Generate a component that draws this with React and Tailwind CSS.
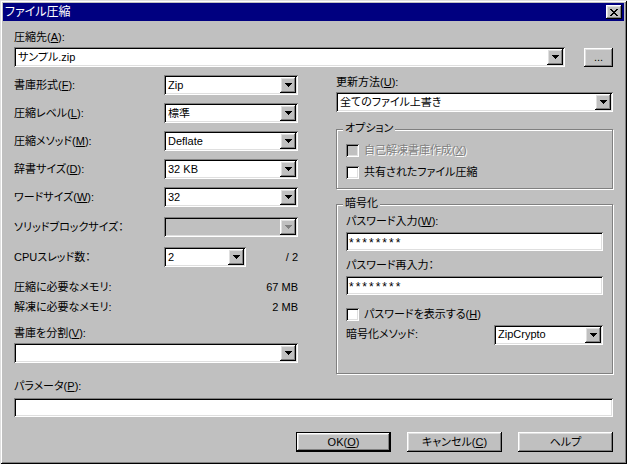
import React from 'react';

const raised =
  'bg-[#c0c0c0] shadow-[inset_-1px_-1px_0_#000000,inset_1px_1px_0_#ffffff,inset_-2px_-2px_0_#808080,inset_2px_2px_0_#dfdfdf]';
const sunken =
  'shadow-[inset_1px_1px_0_#808080,inset_-1px_-1px_0_#ffffff,inset_2px_2px_0_#000000,inset_-2px_-2px_0_#dfdfdf]';

const Arrow = ({ disabled }) => (
  <svg width="7" height="4" viewBox="0 0 7 4" shapeRendering="crispEdges">
    <path d="M0 0h7v1H0zM1 1h5v1H1zM2 2h3v1H2zM3 3h1v1H3z" fill={disabled ? '#808080' : '#000'} />
  </svg>
);

const Combo = ({ value, className = '', disabled }) => (
  <div
    className={`flex h-[20px] items-center pl-[4px] ${sunken} ${disabled ? 'bg-[#c0c0c0]' : 'bg-white'} ${className}`}
  >
    <span className="flex-1 truncate leading-none">{value}</span>
    <div className={`mr-[2px] flex h-[16px] w-[16px] items-center justify-center ${raised}`}>
      <Arrow disabled={disabled} />
    </div>
  </div>
);

const TextBox = ({ value, className = '' }) => (
  <div className={`flex h-[19px] items-center bg-white pl-[3px] ${sunken} ${className}`}>
    <span className="pt-[3px] text-[12px] leading-none tracking-[2px]">{value}</span>
  </div>
);

const Check = ({ label, disabled }) => (
  <div className="flex h-[13px] items-center">
    <div className={`h-[13px] w-[13px] ${sunken} ${disabled ? 'bg-[#c0c0c0]' : 'bg-white'}`} />
    <span
      className={`ml-[5px] leading-none ${disabled ? 'text-[#808080] [text-shadow:1px_1px_0_#ffffff]' : ''}`}
    >
      {label}
    </span>
  </div>
);

const Row = ({ label, children, className = '' }) => (
  <div className={`flex h-[20px] items-center ${className}`}>
    <span className="w-[150px] leading-none">{label}</span>
    {children}
  </div>
);

const Group = ({ title, className = '', children }) => (
  <div
    className={`relative border border-[#808080] shadow-[inset_1px_1px_0_#ffffff,1px_1px_0_#ffffff] ${className}`}
  >
    <span className="absolute top-[-7px] left-[6px] bg-[#c0c0c0] px-[2px] leading-none">{title}</span>
    {children}
  </div>
);

const Button = ({ children, isDefault }) => (
  <div className={`h-[20px] w-[95px] ${isDefault ? 'border border-black' : ''}`}>
    <div className={`flex h-full w-full items-center justify-center ${raised}`}>
      <span className="leading-none">{children}</span>
    </div>
  </div>
);

export default function App() {
  return (
    <div
      className="flex h-[464px] w-[627px] flex-col bg-[#c0c0c0] p-[3px] text-[11px] text-black [font-feature-settings:'palt'] font-['Liberation_Sans','Noto_Sans_CJK_JP',sans-serif] shadow-[inset_1px_1px_0_#dfdfdf,inset_-1px_-1px_0_#000000,inset_2px_2px_0_#ffffff,inset_-2px_-2px_0_#808080]"
    >
      {/* title bar */}
      <div className="flex h-[18px] items-center justify-between bg-[#000080] pl-[2px] pr-[2px]">
        <span className="text-[12px] leading-none text-white">ファイル圧縮</span>
        <div className={`flex h-[14px] w-[16px] items-center justify-center ${raised}`}>
          <svg width="8" height="7" viewBox="0 0 8 7" shapeRendering="crispEdges">
            <path
              d="M0 0h2v1H0zM6 0h2v1H6zM1 1h2v1H1zM5 1h2v1H5zM2 2h4v1H2zM3 3h2v1H3zM2 4h4v1H2zM1 5h2v1H1zM5 5h2v1H5zM0 6h2v1H0zM6 6h2v1H6z"
              fill="#000"
            />
          </svg>
        </div>
      </div>

      <div className="flex flex-1 flex-col px-[11px]">
        <div className="mt-[9px] flex h-[14px] items-center leading-none">
          圧縮先(<u>A</u>):
        </div>
        <div className="mt-[3px] flex items-center">
          <Combo value="サンプル.zip" className="w-[551px]" />
          <div className={`ml-[19px] flex h-[19px] w-[29px] items-center justify-center ${raised}`}>
            <span className="leading-none">...</span>
          </div>
        </div>

        <div className="flex">
          {/* left column */}
          <div className="flex w-[284px] flex-col">
            <Row label={<>書庫形式(<u>F</u>):</>} className="mt-[8px]">
              <Combo value="Zip" className="w-[134px]" />
            </Row>
            <Row label={<>圧縮レベル(<u>L</u>):</>} className="mt-[8px]">
              <Combo value="標準" className="w-[134px]" />
            </Row>
            <Row label={<>圧縮メソッド(<u>M</u>):</>} className="mt-[8px]">
              <Combo value="Deflate" className="w-[134px]" />
            </Row>
            <Row label={<>辞書サイズ(<u>D</u>):</>} className="mt-[8px]">
              <Combo value="32 KB" className="w-[134px]" />
            </Row>
            <Row label={<>ワードサイズ(<u>W</u>):</>} className="mt-[8px]">
              <Combo value="32" className="w-[134px]" />
            </Row>
            <Row label="ソリッドブロックサイズ：" className="mt-[10px]">
              <Combo value="" disabled className="w-[134px]" />
            </Row>
            <Row label="CPUスレッド数：" className="mt-[10px]">
              <Combo value="2" className="w-[82px]" />
              <span className="flex-1 text-right leading-none">/ 2</span>
            </Row>
            <div className="mt-[13px] flex h-[14px] items-center justify-between leading-none">
              <span>圧縮に必要なメモリ:</span>
              <span>67 MB</span>
            </div>
            <div className="mt-[6px] flex h-[14px] items-center justify-between leading-none">
              <span>解凍に必要なメモリ:</span>
              <span>2 MB</span>
            </div>
            <div className="mt-[12px] flex h-[14px] items-center leading-none">
              書庫を分割(<u>V</u>):
            </div>
            <Combo value="" className="mt-[3px] w-[284px]" />
          </div>

          {/* right column */}
          <div className="ml-[38px] flex w-[277px] flex-col">
            <div className="mt-[8px] flex h-[14px] items-center leading-none">
              更新方法(<u>U</u>):
            </div>
            <Combo value="全てのファイル上書き" className="mt-[3px] w-[277px]" />

            <Group title="オプション" className="mt-[17px] h-[60px] pl-[9px] pt-[14px]">
              <Check label={<>自己解凍書庫作成(<u>X</u>)</>} disabled />
              <div className="mt-[9px]">
                <Check label="共有されたファイル圧縮" />
              </div>
            </Group>

            <Group title="暗号化" className="mt-[15px] h-[170px] pl-[9px] pr-[9px] pt-[9px]">
              <div className="flex h-[14px] items-center leading-none">
                パスワード入力(<u>W</u>):
              </div>
              <TextBox value="********" className="mt-[4px]" />
              <div className="mt-[7px] flex h-[14px] items-center leading-none">パスワード再入力：</div>
              <TextBox value="********" className="mt-[4px]" />
              <div className="mt-[13px]">
                <Check label={<>パスワードを表示する(<u>H</u>)</>} />
              </div>
              <div className="mt-[4px] flex h-[19px] items-center justify-between">
                <span className="leading-none">暗号化メソッド:</span>
                <Combo value="ZipCrypto" className="h-[19px] w-[109px]" />
              </div>
            </Group>
          </div>
        </div>

        <div className="mt-[5px] flex h-[14px] items-center leading-none">
          パラメータ(<u>P</u>):
        </div>
        <TextBox value="" className="mt-[5px] h-[18px]" />

        <div className="mt-[15px] flex justify-end gap-[16px]">
          <Button isDefault>
            OK(<u>O</u>)
          </Button>
          <Button>
            キャンセル(<u>C</u>)
          </Button>
          <Button>ヘルプ</Button>
        </div>
      </div>
    </div>
  );
}
